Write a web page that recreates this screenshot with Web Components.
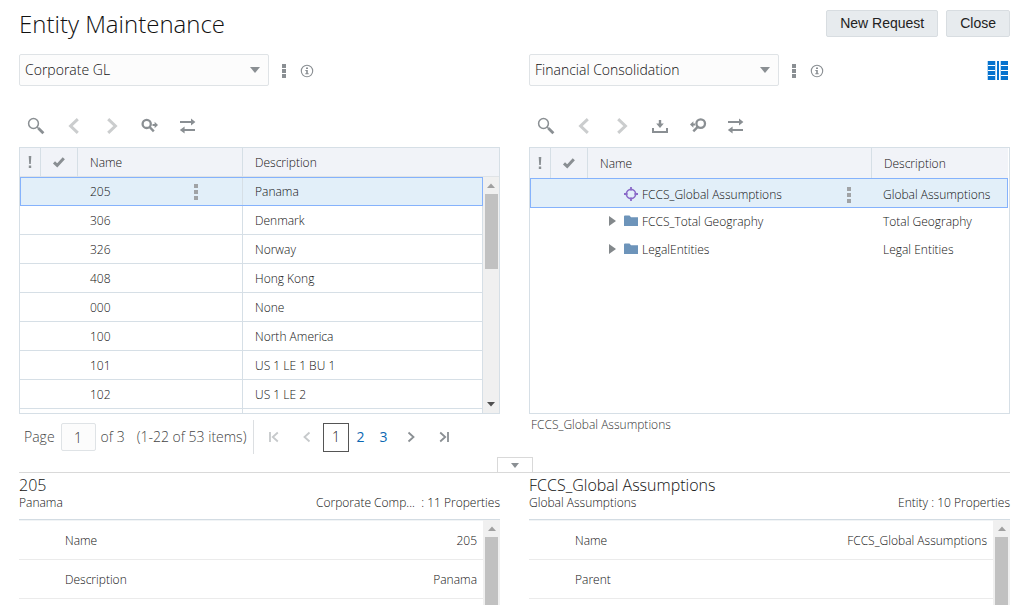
<!DOCTYPE html>
<html lang="en">
<head>
<meta charset="utf-8">
<title>Entity Maintenance</title>
<style>
  html, body { margin: 0; height: 100%; }
  body {
    font-family: "Open Sans", "Noto Sans", sans-serif;
    font-size: 12px;
    font-weight: 330;
    color: #111;
    background: #fff;
    overflow: hidden;
    --line: #d6dfe6;
    --rule: #d9d9d9;
    --head: #f1f3f8;
    --pick: #e2eff9;
    --focus: #85b2fc;
    --icon: #8a8f93;
  }
</style>
</head>
<body>
<entity-page></entity-page>

<script>
const define = (name, html, setup) => {
  const template = document.createElement('template');
  template.innerHTML = '<style>*{box-sizing:border-box}</style>' + html;
  customElements.define(name, class extends HTMLElement {
    constructor() {
      super();
      this.attachShadow({ mode: 'open' }).append(template.content.cloneNode(true));
    }
    connectedCallback() {
      if (setup && !this.ready) { this.ready = true; setup(this, this.shadowRoot); }
    }
  });
};

/* ---------- icons: [width, height, markup] ---------- */
const ICONS = {
  search: [18, 18, '<circle cx="6.5" cy="6.5" r="4.9" fill="none" stroke="currentColor" stroke-width="1.5"/><path d="M10.2 10.2l1.6 1.4" stroke="currentColor" stroke-width="1.4"/><path d="M11.4 11.2l5 5" stroke="currentColor" stroke-width="2.8"/>'],
  prev: [18, 18, '<path d="M12.8 2.2L5.6 9l7.2 6.8" fill="none" stroke="#cbcdce" stroke-width="3"/>'],
  next: [18, 18, '<path d="M5.2 2.2L12.4 9l-7.2 6.8" fill="none" stroke="#cbcdce" stroke-width="3"/>'],
  locate: [18, 18, '<circle cx="5.7" cy="6.9" r="4.1" fill="none" stroke="currentColor" stroke-width="2.3"/><path d="M8.6 10l4.2 4.4" stroke="currentColor" stroke-width="2.4"/><path d="M11.5 8h3" stroke="currentColor" stroke-width="2"/><path d="M13.6 4.8L17 8l-3.4 3.2z" fill="currentColor"/>'],
  locateback: [18, 18, '<circle cx="11.7" cy="6.6" r="4.3" fill="none" stroke="currentColor" stroke-width="2.3"/><path d="M8.7 9.8l-4.4 4.6" stroke="currentColor" stroke-width="2.4"/><path d="M3 7.5h3" stroke="currentColor" stroke-width="2"/><path d="M4.4 4.3L1 7.5l3.4 3.2z" fill="currentColor"/>'],
  swap: [18, 18, '<path d="M1 5h12M4 13h12" stroke="currentColor" stroke-width="2"/><path d="M12 1.600L16.400 5 12 8.400zM5.600 9.600L.8 13l4.800 3.400z" fill="currentColor"/>'],
  download: [18, 18, '<path d="M9 3v6" stroke="currentColor" stroke-width="2.400"/><path d="M5.200 6.600h7.600L9 11z" fill="currentColor"/><path d="M2 11v4h14v-4" fill="none" stroke="currentColor" stroke-width="2"/>'],
  kebab: [4, 16, '<path d="M0 0h4v4H0zM0 6h4v4H0zM0 12h4v4H0z" fill="#a0a3a6"/>'],
  kebabsmall: [4, 14, '<path d="M0 0h4v4H0zM0 5h4v4H0zM0 10h4v4H0z" fill="currentColor"/>'],
  info: [14, 14, '<circle cx="7" cy="7" r="5.700" fill="none" stroke="currentColor" stroke-width="1.100"/><path d="M6 3.500h2v1.400H6zM5.300 6h2.500v3.300h.9v.9H5.300v-.9h.9V6.900h-.9z" fill="currentColor"/>'],
  caret: [10, 6, '<path d="M0 0h10L5 6z" fill="currentColor"/>'],
  caretsmall: [8, 5, '<path d="M0 0h8L4 5z" fill="currentColor"/>'],
  up: [8, 5, '<path d="M0 5h8L4 .5z" fill="#a0a0a0"/>'],
  down: [8, 5, '<path d="M0 0h8L4 4.500z" fill="#505050"/>'],
  check: [14, 12, '<path d="M2 6.400l3.200 3L11.800 2.200" fill="none" stroke="currentColor" stroke-width="3"/>'],
  bang: [4, 12, '<path d="M.7 0h2.600l-.5 8H1.200zM.8 9.500h2.400V12H.8z" fill="currentColor"/>'],
  folder: [14, 14, '<path d="M0 1.500Q0 .5 1 .5h4.500l1.500 1.800h7V11H0z" fill="#6d94ba"/>'],
  target: [14, 16, '<circle cx="7" cy="7" r="4.600" fill="none" stroke="#8a6bc8" stroke-width="1.700"/><path d="M7 0v3.500M7 10.500V14M0 7h3.500M10.500 7H14" stroke="#8a6bc8" stroke-width="1.800"/>'],
  expand: [7, 12, '<path d="M0 0l7 5-7 5z" fill="#83888b"/>'],
  first: [12, 12, '<path d="M2 1v10M9.800 1.500L4.800 6l5 4.500" fill="none" stroke="#c6c9cb" stroke-width="1.800"/>'],
  back: [12, 12, '<path d="M8.500 1.500L3.500 6l5 4.500" fill="none" stroke="#c6c9cb" stroke-width="1.800"/>'],
  forward: [12, 12, '<path d="M3.500 1.500L8.500 6l-5 4.500" fill="none" stroke="currentColor" stroke-width="1.800"/>'],
  last: [12, 12, '<path d="M10 1v10M2.200 1.500L7.200 6l-5 4.500" fill="none" stroke="currentColor" stroke-width="1.800"/>'],
  compare: [21, 19, '<path d="M1 0h7v4H1zM1 5h7v4H1zM1 10h7v4H1zM1 15h7v4H1zM14 0h7v4h-7zM14 5h7v4h-7zM14 10h7v4h-7zM14 15h7v4h-7z" fill="#0572ce"/><path d="M10 0h2v19h-2z" fill="#0572ce"/><path d="M8.500 0v19M13.500 0v19M.5 0v19" stroke="#a9cff0" stroke-width=".8"/>']
};
define('ui-icon', `<style>:host{display:inline-flex;flex:none;color:var(--icon)} svg{display:block}</style>`, (el, root) => {
  const [w, h, art] = ICONS[el.getAttribute('name')];
  root.innerHTML += `<svg width="${w}" height="${h}" viewBox="0 0 ${w} ${h}" aria-hidden="true">${art}</svg>`;
});

define('icon-button', `<style>
  :host{display:inline-flex}
  button{display:flex;align-items:center;justify-content:center;border:0;padding:0;background:none;width:var(--w,22px);height:22px}
</style><button type="button"></button>`, (el, root) => {
  const icon = document.createElement('ui-icon');
  icon.setAttribute('name', el.getAttribute('icon'));
  const button = root.querySelector('button');
  button.setAttribute('aria-label', el.getAttribute('label'));
  button.append(icon);
});

define('action-button', `<style>
  :host{display:inline-flex}
  button{font:14px/20px "Liberation Sans",Arial,sans-serif;color:#222;background:#e7ebee;border:1px solid #d8dde1;border-radius:2px;height:27px;padding:2px 13px 3px}
</style><button type="button"><slot></slot></button>`);

define('source-picker', `<style>
  :host{display:flex;align-items:center;height:32px}
  .field{display:grid;align-items:center;width:52%;height:32px;margin-right:3px}
  select,.field ui-icon{grid-area:1/1}
  select{appearance:none;width:100%;height:100%;border:1px solid #dfe3e6;border-radius:2px;background:#fcfcfc;color:#111;font:inherit;font-size:14px;line-height:20px;padding:0 24px 0 5px;margin:0}
  .field ui-icon{justify-self:end;margin-right:9px;pointer-events:none}
  icon-button{--w:23px;padding-top:1px}
  .end{display:flex;margin-left:auto;margin-right:2px}
</style>
<div class="field"><select aria-label="Source"><option></option></select><ui-icon name="caret"></ui-icon></div>
<icon-button icon="kebabsmall" label="Actions"></icon-button><icon-button icon="info" label="Information"></icon-button>
<div class="end"><slot></slot></div>`, (el, root) => {
  root.querySelector('option').textContent = el.getAttribute('value');
});

define('tool-row', `<style>
  :host{display:flex;gap:16px;padding:0 6px}
</style>`, (el, root) => {
  for (const item of el.getAttribute('tools').split(' ')) {
    const b = document.createElement('icon-button');
    b.setAttribute('icon', item);
    b.setAttribute('label', item);
    root.append(b);
  }
});

define('scroll-rail', `<style>
  :host{display:flex;flex-direction:column;align-items:center;background:#f0f0f0;flex:none;width:16px;min-height:0}
  .arrow{display:flex;height:17px;align-items:center;flex:none}
  .thumb{width:13px;background:#c1c1c1;flex:1}
  .thumb.short{flex:none;height:75px}
  .down{margin-top:auto}
</style><div class="arrow"><ui-icon name="up"></ui-icon></div><div class="thumb"></div>`, (el, root) => {
  if (el.hasAttribute('full')) return;
  root.querySelector('.thumb').classList.add('short');
  root.append(Object.assign(document.createElement('div'), { className: 'arrow down', innerHTML: '<ui-icon name="down"></ui-icon>' }));
});

const TABLE = `
  :host{display:flex;height:267px;border:1px solid var(--line);overflow:hidden}
  table{border-collapse:separate;border-spacing:0;table-layout:fixed;width:100%}
  .view{flex:1;min-width:0}
  th,td{text-align:left;font-weight:inherit;font-size:12px;line-height:16px;padding:2px 12px 0;white-space:nowrap}
  th{background:var(--head);border-right:1px solid var(--line)}
  th:last-child{border-right:0}
  th.i{text-align:center;padding:0}
  .i ui-icon{display:flex;justify-content:center}
  .cell{display:flex;align-items:center}
  .more{margin-left:auto}
  .w1{width:21px}.w2{width:37px}
  .picked{background:var(--pick);outline:1px solid var(--focus);outline-offset:-1px}
`;
const MARKS = `<th class="i"><ui-icon name="bang"></ui-icon></th><th class="i"><ui-icon name="check"></ui-icon></th>`;

const members = [['205','Panama'],['306','Denmark'],['326','Norway'],['408','Hong Kong'],['000','None'],['100','North America'],['101','US 1 LE 1 BU 1'],['102','US 1 LE 2'],['','']];
define('member-list', `<style>${TABLE}
  th{height:29px;border-bottom:1px solid #e0e3e6}
  td{height:29px;border-bottom:1px solid var(--line)}
  td:nth-child(n+3){border-right:1px solid var(--line)}
  .w3{width:165px}
  .more{margin-right:32px}
  .side{display:flex;flex-direction:column}
  .cap{height:29px;background:var(--head);border-bottom:1px solid #e0e3e6;flex:none}
  scroll-rail{flex:1}
</style>
<div class="view"><table><colgroup><col class="w1"><col class="w2"><col class="w3"><col></colgroup>
<thead><tr>${MARKS}<th>Name</th><th>Description</th></tr></thead>
<tbody>${members.map(([n, d], i) => `<tr class="${i ? '' : 'picked'}"><td></td><td></td><td><div class="cell">${n}${i ? '' : '<ui-icon class="more" name="kebab"></ui-icon>'}</div></td><td>${d}</td></tr>`).join('')}</tbody></table></div>
<div class="side"><div class="cap"></div><scroll-rail></scroll-rail></div>`);

define('member-tree', `<style>${TABLE}
  :host{padding-right:1px}
  th{height:30px}
  td{height:28px;padding-top:0}
  td:last-child{padding-left:11px;padding-right:11px}
  .picked td{height:30px;padding-top:3px}
  .w4{width:136px}
  .twist{width:24px;display:flex;justify-content:center}
  .kind{width:18px}
  .more{margin-right:9px}
</style>
<div class="view"><table><colgroup><col class="w1"><col class="w2"><col><col class="w4"></colgroup>
<thead><tr>${MARKS}<th>Name</th><th>Description</th></tr></thead>
<tbody>
<tr class="picked"><td></td><td></td><td><div class="cell"><span class="twist"></span><ui-icon class="kind" name="target"></ui-icon>FCCS_Global Assumptions<ui-icon class="more" name="kebab"></ui-icon></div></td><td>Global Assumptions</td></tr>
<tr><td></td><td></td><td><div class="cell"><span class="twist"><ui-icon name="expand"></ui-icon></span><ui-icon class="kind" name="folder"></ui-icon>FCCS_Total Geography</div></td><td>Total Geography</td></tr>
<tr><td></td><td></td><td><div class="cell"><span class="twist"><ui-icon name="expand"></ui-icon></span><ui-icon class="kind" name="folder"></ui-icon>LegalEntities</div></td><td>Legal Entities</td></tr>
</tbody></table></div>`);

define('page-bar', `<style>
  :host{display:flex;align-items:center;height:34px;padding-left:5px;font-size:14px;line-height:20px;color:#444;white-space:nowrap}
  label{display:flex;align-items:center;gap:6px}
  input{width:35px;height:28px;border:1px solid #dfe3e6;border-radius:2px;background:#fcfcfc;text-align:center;font:inherit;color:#333;padding:0;margin:0}
  .of{margin:0 12px 0 5px}
  .nav{display:flex;align-items:center;margin-left:auto;padding-left:9px;border-left:1px solid #dcdfe2;height:34px;width:247px}
  icon-button+icon-button{margin:0 5px 0 11px}
  .now{width:26px;height:29px;border:1px solid #555;display:flex;align-items:center;justify-content:center;color:#222}
  a{color:#0b67b2;text-decoration:none;width:23px;text-align:center;font-weight:400}
  .after{display:flex;margin-left:5px}
</style>
<label>Page <input value="1"></label><span class="of">of 3</span><span>(1-22 of 53 items)</span>
<nav class="nav" aria-label="Pages"><icon-button icon="first" label="First"></icon-button><icon-button icon="back" label="Previous"></icon-button>
<span class="now">1</span><a href="#2">2</a><a href="#3">3</a><span class="after"><icon-button icon="forward" label="Next"></icon-button><icon-button icon="last" label="Last"></icon-button></span></nav>`);

define('detail-pane', `<style>
  :host{display:flex;flex-direction:column;min-width:0;min-height:0}
  header{display:grid;grid-template-columns:1fr auto;align-content:start;height:47px;border-bottom:1px solid #d3dce3;padding-top:2px;line-height:16px;flex:none}
  h2{grid-column:1/3;margin:0;font-size:16px;line-height:20px;font-weight:inherit}
  .count{white-space:pre}
  .body{display:flex;flex:1;min-height:0;overflow:hidden}
  .view{flex:1;min-width:0}
  table{width:100%;border-collapse:separate;border-spacing:0;border-top:1px solid #f1f4f6}
  th,td{height:39px;border-bottom:1px solid #ebebeb;font-weight:inherit;font-size:12px;line-height:16px;padding:2px 0 0}
  th{text-align:left;padding-left:46px}
  td{text-align:right;padding-right:6px}
  scroll-rail{width:17px}
</style>
<header><h2></h2><span class="sub"></span><span class="count"></span></header>
<div class="body"><div class="view"><table><tbody></tbody></table></div><scroll-rail full></scroll-rail></div>`, (el, root) => {
  root.querySelector('h2').textContent = el.getAttribute('heading');
  root.querySelector('.sub').textContent = el.getAttribute('sub');
  root.querySelector('.count').textContent = el.getAttribute('count');
  root.querySelector('tbody').innerHTML = el.getAttribute('rows').split('|').map(r => {
    const [k, v] = r.split('=');
    return `<tr><th scope="row">${k}</th><td>${v}</td></tr>`;
  }).join('');
});

define('entity-page', `<style>
  :host{display:flex;flex-direction:column;height:100vh;padding:0 10px 0 19px;box-sizing:border-box}
  header{display:flex;align-items:center;gap:8px;padding-top:10px;height:37px;flex:none}
  h1{margin:0 auto 0 0;font-size:24px;line-height:32px;font-weight:inherit}
  .columns{display:grid;grid-template-columns:1fr 1fr;gap:29px}
  .top{padding-top:17px;height:420px;flex:none}
  .pane{display:flex;flex-direction:column;min-width:0}
  tool-row{margin:29px 0 10px}
  page-bar{margin-top:6px}
  .path{margin:3px 2px 0;line-height:16px;color:#333}
  .split{display:flex;justify-content:center;border-bottom:1px solid var(--rule);flex:none}
  .split button{display:flex;align-items:center;justify-content:center;width:36px;height:15px;padding:0;border:1px solid var(--rule);border-bottom:0;background:#fff}
  .bottom{flex:1;min-height:0;grid-template-rows:100%}
</style>
<header><h1>Entity Maintenance</h1><action-button>New Request</action-button><action-button>Close</action-button></header>
<main class="columns top">
  <section class="pane">
    <source-picker value="Corporate GL"></source-picker>
    <tool-row tools="search prev next locate swap"></tool-row>
    <member-list></member-list>
    <page-bar></page-bar>
  </section>
  <section class="pane">
    <source-picker value="Financial Consolidation"><ui-icon name="compare"></ui-icon></source-picker>
    <tool-row tools="search prev next download locateback swap"></tool-row>
    <member-tree></member-tree>
    <div class="path">FCCS_Global Assumptions</div>
  </section>
</main>
<div class="split"><button type="button" aria-label="Collapse properties"><ui-icon name="caretsmall"></ui-icon></button></div>
<div class="columns bottom">
  <detail-pane heading="205" sub="Panama" count="Corporate Comp...  : 11 Properties" rows="Name=205|Description=Panama|="></detail-pane>
  <detail-pane heading="FCCS_Global Assumptions" sub="Global Assumptions" count="Entity : 10 Properties" rows="Name=FCCS_Global Assumptions|Parent=|="></detail-pane>
</div>`);
</script>
</body>
</html>
